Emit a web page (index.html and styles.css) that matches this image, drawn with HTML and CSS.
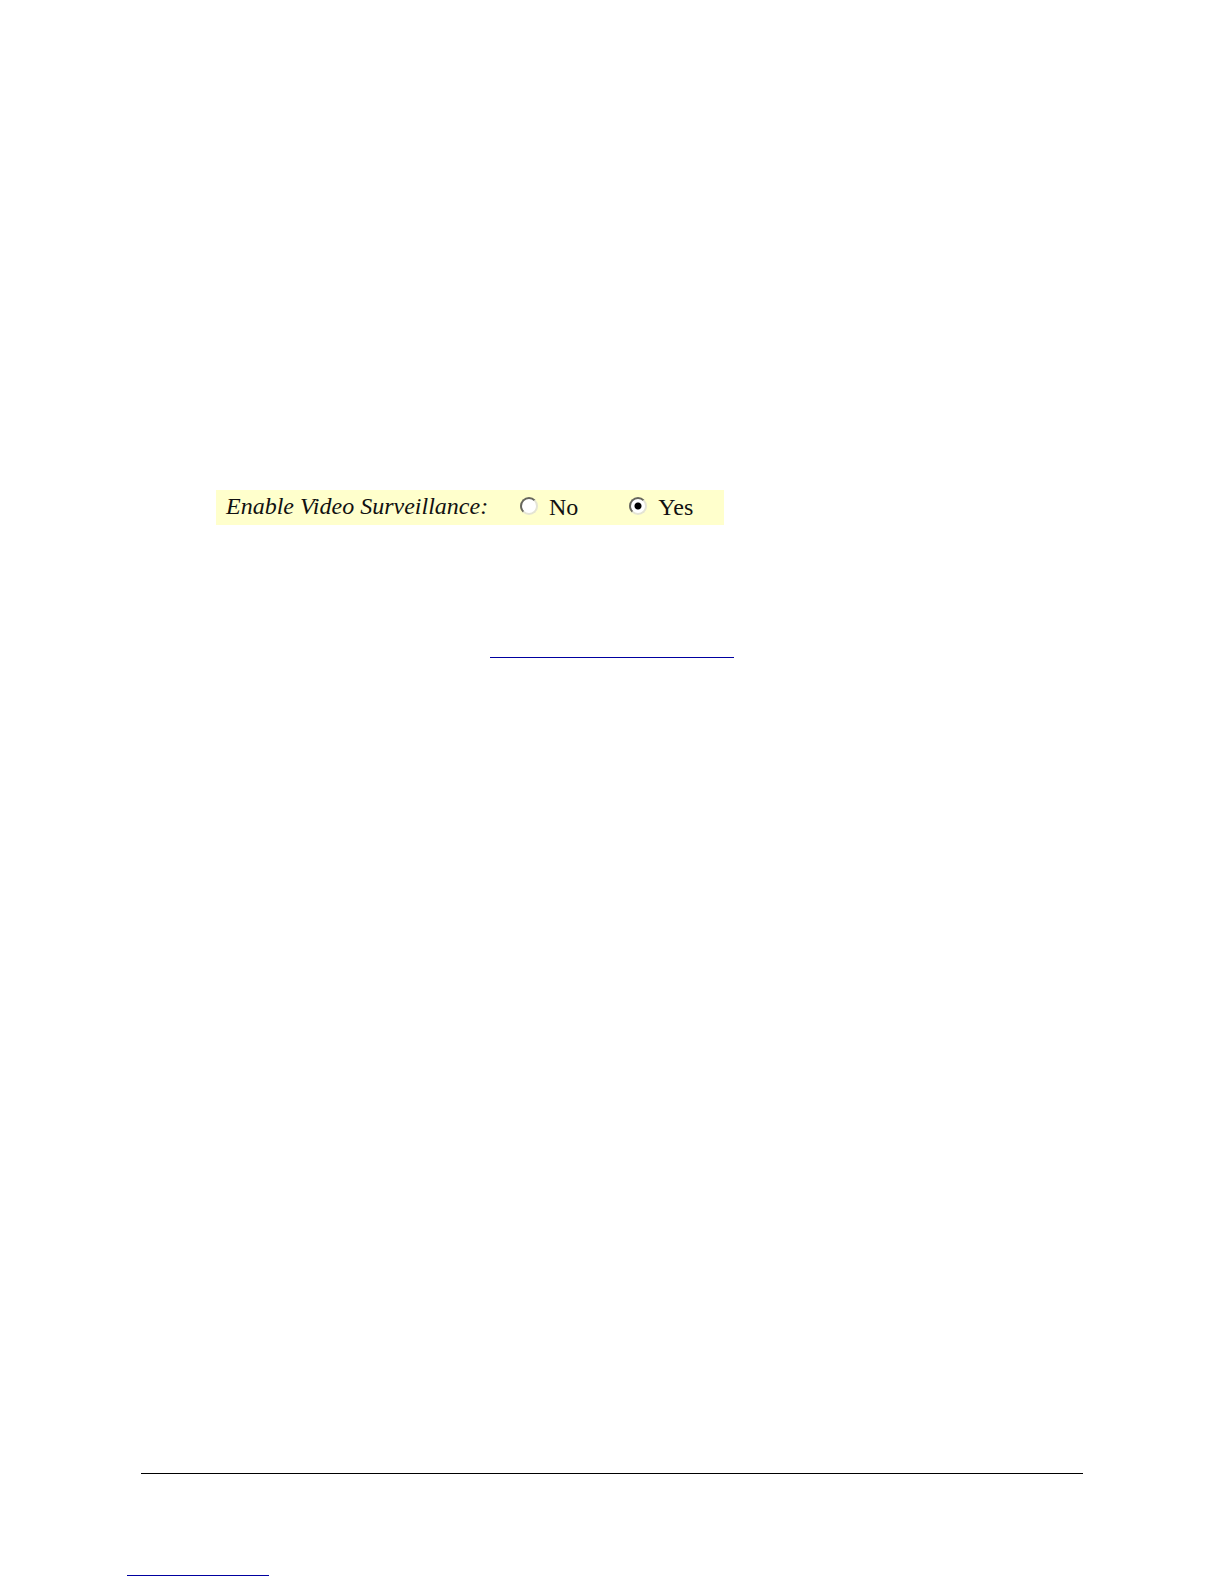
FILE: index.html
```html
<!DOCTYPE html>
<html lang="en">
<head>
  <meta charset="UTF-8" />
  <meta name="viewport" content="width=device-width, initial-scale=1.0"/>
  <title>Video Surveillance</title>
  <link rel="stylesheet" href="styles.css">
</head>
<body>
  <main class="content">
    <form class="option-row" role="radiogroup" aria-labelledby="surveillanceLabel">
      <span class="option-title" id="surveillanceLabel">Enable Video Surveillance:</span>
      <label class="choice">
        <input type="radio" name="surveillance" value="no">
        <span>No</span>
      </label>
      <label class="choice">
        <input type="radio" name="surveillance" value="yes" checked>
        <span>Yes</span>
      </label>
    </form>
    <a class="line-link section-link" href="#" aria-label="Related section"></a>
  </main>

  <footer class="footer">
    <hr class="rule">
    <a class="line-link footer-link" href="#" aria-label="Website"></a>
  </footer>
</body>
</html>
```

FILE: styles.css
```css
:root {
  --row-bg: #ffffcc;
  --link: #0000a0;
}

* {
  box-sizing: border-box;
}

body {
  margin: 0;
  min-height: 100vh;
  display: flex;
  flex-direction: column;
  background: #fff;
  color: #111;
  font-family: "Liberation Serif", "Times New Roman", serif;
  font-size: 24px;
  line-height: 35px;
}

.content {
  flex: 1;
  padding: 490px 141px 0 216px;
}

.option-row {
  display: flex;
  width: 508px;
  max-width: 100%;
  height: 35px;
  padding-left: 10px;
  background: var(--row-bg);
}

.option-title {
  flex: none;
  width: 294px;
  font-style: italic;
  line-height: 32px;
  white-space: nowrap;
}

.choice {
  display: flex;
  align-items: flex-start;
  gap: 11px;
}

.choice + .choice {
  margin-left: 51px;
}

.choice input {
  appearance: none;
  flex: none;
  width: 18px;
  height: 18px;
  margin: 7px 0 0;
  border: 2px solid;
  border-color: #66665c #e4e4d4 #e4e4d4 #66665c;
  border-radius: 50%;
  background: #fff;
}

.choice input:checked {
  background: radial-gradient(circle, #000 3px, #fff 4px);
}

.line-link {
  display: block;
  border-bottom: 1px solid var(--link);
}

.section-link {
  width: 244px;
  height: 24px;
  margin: 109px 0 0 274px;
}

.footer {
  padding: 0 141px 8px 127px;
}

.rule {
  height: 1px;
  margin: 0 0 0 14px;
  border: none;
  background: #000;
}

.footer-link {
  width: 142px;
  height: 24px;
  margin-top: 78px;
}
```
